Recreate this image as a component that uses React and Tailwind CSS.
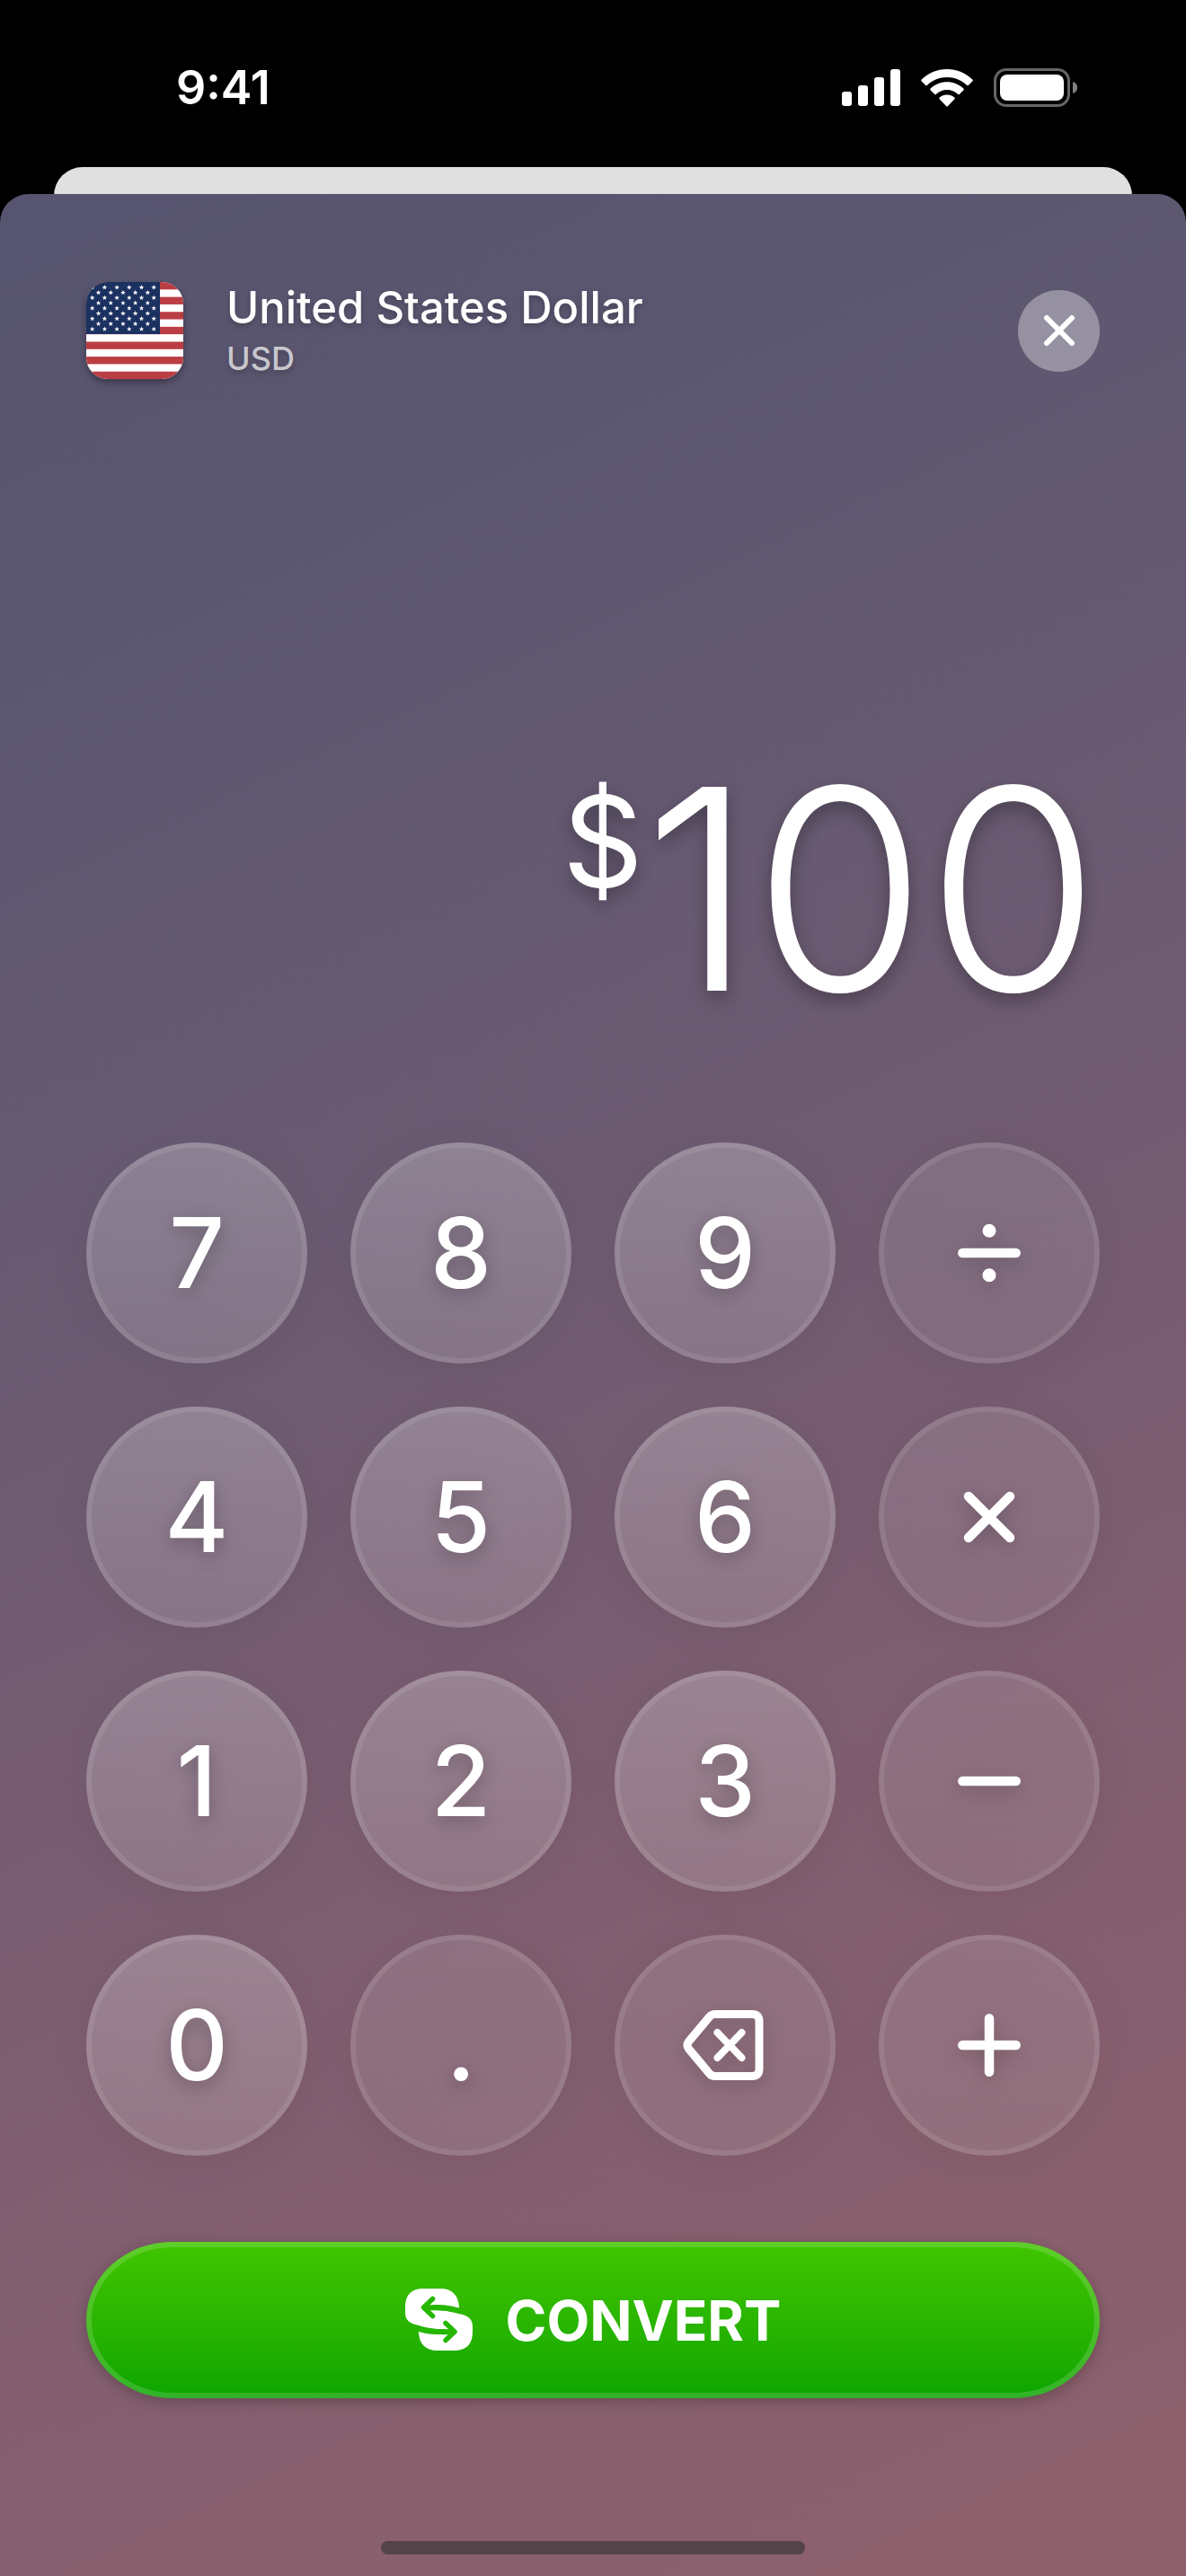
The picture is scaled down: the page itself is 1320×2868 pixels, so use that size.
import { useState } from 'react';

const keys = [
  { label: '7' },
  { label: '8' },
  { label: '9' },
  { label: 'Divide', icon: 'divide' },
  { label: '4' },
  { label: '5' },
  { label: '6' },
  { label: 'Multiply', icon: 'multiply' },
  { label: '1' },
  { label: '2' },
  { label: '3' },
  { label: 'Subtract', icon: 'minus' },
  { label: '0' },
  { label: '.', soft: true },
  { label: 'Delete', icon: 'backspace' },
  { label: 'Add', icon: 'plus' },
];

// Five-pointed star centred on cx, cy
const starPoints = (cx, cy, r) =>
  Array.from({ length: 10 }, (_, i) => {
    const radius = i % 2 === 0 ? r : r * 0.42;
    const angle = (Math.PI / 5) * i - Math.PI / 2;
    return `${(cx + radius * Math.cos(angle)).toFixed(2)},${(cy + radius * Math.sin(angle)).toFixed(2)}`;
  }).join(' ');

const stars = [];
for (let row = 0; row < 9; row++) {
  const count = row % 2 === 0 ? 6 : 5;
  for (let col = 0; col < count; col++) {
    stars.push([6.7 + (row % 2) * 6.85 + col * 13.7, 6 + row * 5.8]);
  }
}

const UsFlag = () => (
  <svg viewBox="0 0 108 108" className="size-27 rounded-3xl shadow-[0_4px_8px_rgba(0,0,0,0.35)]" role="img" aria-label="Flag of the United States">
    <rect width="108" height="108" fill="#fff" />
    {[0, 2, 4, 6, 8, 10, 12].map((n) => (
      <rect key={n} y={(n * 108) / 13} width="108" height={108 / 13} fill="#bb3d44" />
    ))}
    <rect width="82" height="58" fill="#1b3160" />
    {stars.map(([x, y]) => (
      <polygon key={`${x}-${y}`} points={starPoints(x, y, 2.9)} fill="#fff" />
    ))}
  </svg>
);

const KeyIcon = ({ name }) => (
  <svg
    viewBox="0 0 96 96"
    className="size-24 drop-shadow-[0_6px_10px_rgba(0,0,0,0.2)]"
    fill="none"
    stroke="currentColor"
    strokeWidth="10.5"
    strokeLinecap="round"
    strokeLinejoin="round"
    aria-hidden="true"
  >
    {name === 'divide' && (
      <>
        <path d="M18.3 48h59.4" />
        <circle cx="48" cy="23.2" r="7.5" fill="currentColor" stroke="none" />
        <circle cx="48" cy="72.8" r="7.5" fill="currentColor" stroke="none" />
      </>
    )}
    {name === 'multiply' && <path d="M25 25l46 46M71 25L25 71" />}
    {name === 'minus' && <path d="M18.3 48h59.4" />}
    {name === 'plus' && <path d="M18.3 48h59.4M48 18.3v59.4" />}
    {name === 'backspace' && (
      <>
        <path
          strokeWidth="9"
          d="M37 13.5h41q8 0 8 8v53q0 8-8 8H37q-4 0-6.500-3L7.500 52q-3-4 0-8L30.500 16.500q2.500-3 6.500-3z"
        />
        <path strokeWidth="8" d="M39.500 34l27 28M66.500 34l-27 28" />
      </>
    )}
  </svg>
);

const StatusBar = () => (
  <div className="flex h-[186px] items-start justify-between pl-49 pr-30 pt-16">
    <span className="text-[52px] leading-[68px] font-semibold">9:41</span>
    <div className="flex items-center gap-[23px] pt-3">
      <svg viewBox="0 0 65 42" className="h-[42px] w-[65px]" fill="#fff" aria-hidden="true">
        <rect x="0" y="25" width="11" height="16" rx="3" />
        <rect x="18" y="18" width="11" height="23" rx="3" />
        <rect x="36" y="9" width="11" height="32" rx="3" />
        <rect x="54" y="0" width="11" height="41" rx="3" />
      </svg>
      <svg viewBox="0 0 58 42" className="h-[42px] w-[58px]" fill="#fff" aria-hidden="true">
        <path d="M29 0C18 0 8 4.300.700 11.500q-1 1 0 2L5 17.800q1 1 2 0C13 12.200 20.700 9 29 9s16 3.200 22 8.800q1 1 2 0l4.300-4.300q1-1 0-2C50 4.300 40 0 29 0z" />
        <path d="M29 14.300c-7 0-13.500 2.700-18.300 7.200q-1 1 0 2l4.300 4.300q1 1 2 0C20.300 25 24.400 23 29 23s8.700 2 12 4.800q1 1 2 0l4.300-4.300q1-1 0-2C42.500 17 36 14.300 29 14.300z" />
        <path d="M29 28.500c-3.200 0-6 1.100-8.300 3q-1 1 0 2l7.300 7.500q1 1 2 0l7.300-7.500q1-1 0-2C35 29.600 32.200 28.500 29 28.500z" />
      </svg>
      <svg viewBox="0 0 94 43" className="h-[43px] w-[94px]" aria-hidden="true">
        <rect x="1.500" y="1.500" width="82" height="40" rx="12.500" fill="none" stroke="#666" strokeWidth="3" />
        <rect x="7" y="7" width="71" height="29" rx="8" fill="#fff" />
        <path d="M88 15c3.500 1 5 3.500 5 6.500s-1.500 5.500-5 6.500z" fill="#808080" />
      </svg>
    </div>
  </div>
);

const ConvertIcon = () => (
  <svg viewBox="0 0 76 70" className="h-[70px] w-[76px]" fill="none" aria-hidden="true">
    <path
      fill="#fff"
      d="M20 0H40C52 0 60 8 60 22C50 18 40 18 30 18V24C42 23 52 26 62 28.500C70 30.500 75 34 75 42V48C75 62 68 69 54 69H36C22 69 15 61 15 47.500C24 51 33 51 45 51V45C33 46 22 43 13 40.500C5 38.500 0 35 0 27V20C0 7 7 0 20 0Z"
    />
    <path stroke="#26b700" strokeWidth="5.500" strokeLinecap="round" strokeLinejoin="round" d="M30.500 11.500L20.500 21L30.500 30.500M45 38.500L55 48L45 57.500" />
    <path stroke="#26b700" strokeWidth="6" d="M22 21.200H32C42 21 50 22 61 25M14 44.500C25 48 34 48.200 43 48.200H54" />
  </svg>
);

const Key = ({ label, icon, soft, onPress }) => (
  <button
    type="button"
    aria-label={label}
    onClick={onPress}
    className={`flex aspect-square items-center justify-center rounded-full bg-linear-to-b text-[108px] leading-none font-medium text-shadow-[0_6px_20px_rgba(0,0,0,0.25)] shadow-[0_6px_48px_rgba(0,0,0,0.06),inset_0_0_0_6px_rgba(255,255,255,0.09)] ${
      icon || soft ? 'from-white/12 to-white/9' : 'from-white/24 to-white/15'
    }`}
  >
    {icon ? <KeyIcon name={icon} /> : label}
  </button>
);

const App = () => {
  const [amount, setAmount] = useState('100');

  const press = (key) => {
    if (key.icon === 'backspace') setAmount((a) => a.slice(0, -1) || '0');
    else if (!key.icon) setAmount((a) => (a === '0' && key.label !== '.' ? key.label : a + key.label));
  };

  return (
    <div className="flex min-h-screen flex-col bg-black font-[Inter,sans-serif] text-white">
      <StatusBar />

      {/* Edge of the screen below the sheet */}
      <div className="-mb-8 mx-15 h-[62px] rounded-t-[32px] bg-[#e0e0e0]" />

      {/* Sheet */}
      <main className="flex flex-1 flex-col rounded-t-[32px] bg-[linear-gradient(155deg,#56546f_0%,#5d5770_19%,#685a72_36%,#765c71_55%,#805e70_68%,#88606f_82%,#8e606c_100%)] px-24 pt-24">
        <header className="flex items-center">
          <UsFlag />
          <div className="ml-12 flex-1 text-shadow-[0_3px_6px_rgba(0,0,0,0.25)]">
            <h1 className="text-[49px] leading-[62px] font-medium">United States Dollar</h1>
            <p className="text-4xl leading-[50px] font-medium text-white/70">USD</p>
          </div>
          <button type="button" aria-label="Close" className="flex size-[91px] items-center justify-center rounded-full bg-white/35">
            <svg viewBox="0 0 36 36" className="size-9" stroke="#fff" strokeWidth="6" strokeLinecap="round" aria-hidden="true">
              <path d="M4 4l28 28M32 4L4 32" />
            </svg>
          </button>
        </header>

        <output className="flex flex-1 items-end justify-end pb-[126px] font-light text-shadow-[0_8px_20px_rgba(0,0,0,0.3)]">
          <span className="flex items-start">
            <span className="pt-8 text-[140px] leading-none font-normal">$</span>
            <span className="text-[312px] leading-none">{amount}</span>
          </span>
        </output>

        <div className="grid grid-cols-4 gap-12">
          {keys.map((key) => (
            <Key key={key.label} {...key} onPress={() => press(key)} />
          ))}
        </div>

        <button
          type="button"
          className="mt-24 flex h-[174px] items-center justify-center gap-9 rounded-[96px/87px] bg-linear-to-b from-[#40c600] to-[#08a500] text-[62px] font-bold shadow-[0_4px_16px_rgba(0,0,0,0.25),inset_0_0_0_6px_rgba(255,255,255,0.16)]"
        >
          <ConvertIcon />
          CONVERT
        </button>

        <div className="mx-auto mt-[159px] mb-6 h-[15px] w-[472px] rounded-full bg-[#54444a]" />
      </main>
    </div>
  );
};

export default App;
